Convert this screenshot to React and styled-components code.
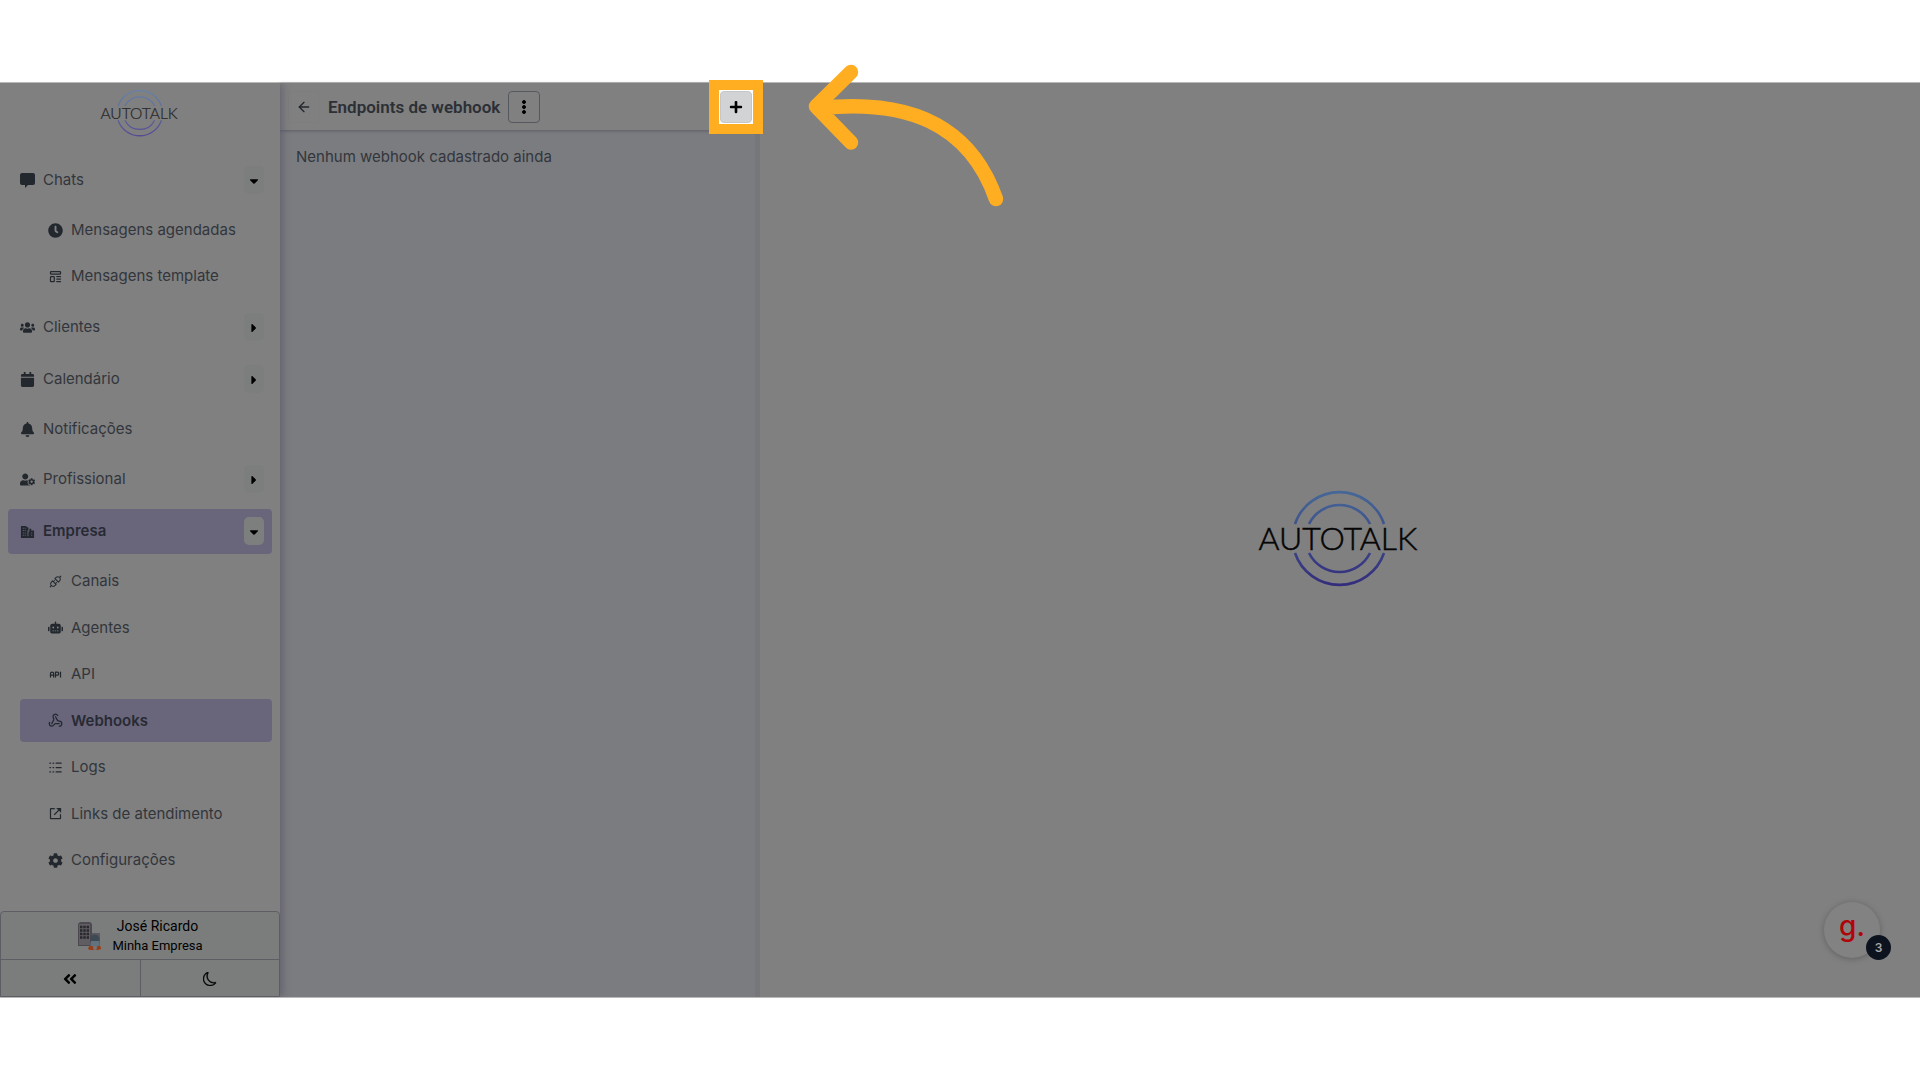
import React from "react";
import styled, { createGlobalStyle } from "styled-components";
import { FaClock, FaUsers, FaCalendar, FaBell, FaUserCog, FaRobot, FaCog, FaPlus, FaAngleDoubleLeft, FaCaretDown, FaCaretRight } from "react-icons/fa";
import { AiOutlineApi } from "react-icons/ai";
import { BsThreeDotsVertical, BsMoon } from "react-icons/bs";
import { TbApi, TbTemplate } from "react-icons/tb";
import { BiLinkExternal } from "react-icons/bi";
import { Logs, ArrowLeft, Webhook } from "lucide-react";

const GlobalStyle = createGlobalStyle`
  *, *::before, *::after { box-sizing: border-box; }
  body { margin: 0; background: #fff; font-family: Inter, "Liberation Sans", sans-serif; color: #32363c; }
  button { font: inherit; cursor: pointer; }
`;

const Page = styled.div`
  min-height: 100vh;
  padding: 82px 0;
  display: flex;
`;

const Stage = styled.div`
  position: relative;
  flex: 1;
  display: flex;
  background: #808080;
  border: solid #b8b8b8;
  border-width: 1px 0;
`;

const Sidebar = styled.aside`
  width: 280px;
  display: flex;
  flex-direction: column;
  z-index: 1;
  box-shadow: 2px 0 8px rgba(70, 68, 92, 0.5);
  clip-path: inset(0 -12px 0 0);
  background: #808080;
`;

const LogoBar = styled.div`
  display: flex;
  justify-content: center;
  padding: 7px 0 20px;
`;

const Nav = styled.nav`
  flex: 1;
  display: flex;
  flex-direction: column;
  gap: 7px;
  padding: 0 8px 29px;
`;

const Group = styled.div`
  display: flex;
  flex-direction: column;
  gap: 6px;
  flex: ${(p) => (p.$grow ? "1" : "none")};
`;

const Row = styled.div`
  display: flex;
  align-items: center;
  height: ${(p) => (p.$plain ? "41px" : "45px")};
  padding: 0 8px 0 12px;
  border-radius: 4px;
  background: ${(p) => (p.$active ? "#69667c" : "transparent")};
`;

const NavLink = styled.a`
  flex: 1;
  display: flex;
  align-items: center;
  gap: 8px;
  font-size: 15px;
  line-height: 20px;
  font-weight: ${(p) => (p.$active ? 600 : 400)};
  color: ${(p) => (p.$active ? "#282a33" : "#32363c")};
  text-decoration: none;
  svg { width: 15px; height: 15px; color: #23282e; flex: none; }
`;

const SubList = styled.div`
  flex: 1;
  display: flex;
  flex-direction: column;
  justify-content: space-between;
  gap: 3px;
  padding-left: 12px;
`;

const SubLink = styled(NavLink)`
  flex: none;
  height: 43px;
  padding-left: 28px;
  border-radius: 4px;
  background: ${(p) => (p.$active ? "#69667c" : "transparent")};
`;

const Toggle = styled.button`
  width: 20px;
  height: 28px;
  padding: 2px 0 0;
  display: grid;
  place-items: center;
  border: 0;
  border-radius: 5px;
  color: #000;
  background: ${(p) => (p.$active ? "#7d7f7e" : "#7c7e7e")};
  svg { width: 14px; height: 14px; }
`;

const Footer = styled.footer`
  border: 1px solid #5d5e64;
  border-radius: 4px 4px 0 0;
  background: #7b7d7c;
  color: #000;
`;

const Account = styled.button`
  width: 100%;
  height: 48px;
  display: flex;
  align-items: center;
  justify-content: center;
  gap: 10px;
  padding: 0;
  border: 0;
  border-bottom: 1px solid #5d5e64;
  background: none;
  color: inherit;
`;

const AccountText = styled.span`
  display: flex;
  flex-direction: column;
  font-family: Roboto, sans-serif;
  font-size: 14px;
  line-height: 20px;
`;

const Company = styled.span`
  font-size: 13px;
`;

const FooterActions = styled.div`
  display: flex;
`;

const FooterButton = styled.button`
  flex: 1;
  height: 36px;
  display: grid;
  place-items: center;
  padding: 2px 0 0;
  border: 0;
  background: none;
  color: #000;
  & + & { border-left: 1px solid #5d5e64; }
`;

const ListPanel = styled.section`
  width: 480px;
  display: flex;
  flex-direction: column;
  background: #7b7c7f;
`;

const PanelHeader = styled.header`
  height: 47px;
  display: flex;
  align-items: center;
  gap: 8px;
  padding: 0 7px 0 8px;
  background: #808080;
  box-shadow: 0 1px 3px rgba(80, 80, 92, 0.7);
  z-index: 0;
`;

const Title = styled.h1`
  margin: 0;
  font-family: Roboto, sans-serif;
  font-size: 17px;
  line-height: 24px;
  font-weight: 600;
  color: #2c3036;
`;

const SquareButton = styled.button`
  width: 32px;
  height: 32px;
  display: grid;
  place-items: center;
  padding: 0;
  border: 1px solid ${(p) => p.$line || "#7d7e80"};
  border-radius: 4px;
  background: ${(p) => p.$fill || "transparent"};
  color: ${(p) => p.$ink || "#000"};
`;

const Highlight = styled.span`
  margin-left: auto;
  padding: 1px;
  background: #fff;
  outline: 10px solid #ffae22;
  z-index: 2;
`;

const PanelBody = styled.div`
  flex: 1;
  border-right: 5px solid #77777b;
  padding: 15px 16px;
  font-size: 15px;
  line-height: 24px;
`;

const Empty = styled.p`
  margin: 0;
`;

const Main = styled.main`
  flex: 1;
  display: grid;
  place-items: center;
`;

const Arrow = styled.svg`
  position: absolute;
  left: 800px;
  top: -23px;
`;

const Guide = styled.button`
  position: absolute;
  right: 40px;
  bottom: 39px;
  width: 56px;
  height: 56px;
  padding: 0 0 8px;
  border: 0;
  border-radius: 50%;
  background: #828282;
  box-shadow: 0 1px 6px rgba(0, 0, 0, 0.25);
  color: #b00508;
  font-size: 28px;
  line-height: 40px;
  font-weight: 500;
`;

const Badge = styled.span`
  position: absolute;
  right: -11px;
  bottom: -2px;
  width: 25px;
  height: 25px;
  border-radius: 50%;
  background: #0c131e;
  color: #a5a7aa;
  font-size: 12px;
  line-height: 25px;
  font-weight: 600;
`;

function Logo({ width, top, bottom, ink, id }) {
  return (
    <svg width={width} viewBox="2 1 160 98" overflow="visible" role="img" aria-label="AUTOTALK">
      <defs>
        <linearGradient id={id} gradientUnits="userSpaceOnUse" x1="0" y1="2" x2="0" y2="96">
          <stop offset="0" stopColor={top} />
          <stop offset="1" stopColor={bottom} />
        </linearGradient>
      </defs>
      <g fill="none" stroke={`url(#${id})`} strokeWidth="2.600">
        <path d="M37 34A47 47 0 0 1 126 34M51 34A34 34 0 0 1 112 34M37 63A47 47 0 0 0 126 63M51 63A34 34 0 0 0 112 63" />
      </g>
      <text x="80" y="60" textAnchor="middle" fontFamily="Lato, sans-serif" fontWeight="300" fontSize="32" fill={ink} stroke={ink} strokeWidth="0.500">AUTOTALK</text>
    </svg>
  );
}

function ChatIcon() {
  return (
    <svg viewBox="0 0 15 15" fill="currentColor" aria-hidden="true">
      <path d="M2 0h11a2 2 0 0 1 2 2v8a2 2 0 0 1-2 2H8l-3 3v-3H2a2 2 0 0 1-2-2V2a2 2 0 0 1 2-2z" />
    </svg>
  );
}

function BuildingIcon() {
  return (
    <svg viewBox="0 0 16 16" fill="currentColor" aria-hidden="true">
      <path fillRule="evenodd" d="M1 2h5l3 2v4h1V5h2v2h3v8H1zM3 4v1h1V4zm2 0v1h1V4zM3 6.500v1h1v-1zm2 0v1h1v-1zM3 9v1h1V9zm2 0v1h1V9zm-2 2.500v1h1v-1zm2 0v1h1v-1zM8 7v6h1V7zm4 2v1h1V9zm0 2.500v1h1v-1z" />
    </svg>
  );
}

function AccountIcon() {
  return (
    <svg width="25" height="30" viewBox="0 0 25 30" aria-hidden="true">
      <path d="M1 3l2-2h10l2 2v22H1z" fill="#4c4a50" />
      <path d="M2 3h11v21H2z" fill="#5f5c62" />
      <path d="M3 6h9M3 9.500h9M3 13h9M3 16.500h9" stroke="#29272e" strokeWidth="2.400" strokeDasharray="2.400 0.900" />
      <path d="M15 12h8v14h-8z" fill="#5b5960" />
      <circle cx="18" cy="18" r="4.500" fill="#3d4a54" />
      <path d="M14 20h8l1 7H13z" fill="#62727e" />
      <path d="M11 28q1-4 4-3l3 2 3-2q3-1 3 3l-3 1H13z" fill="#963f18" />
      <circle cx="18" cy="27" r="2" fill="#777" />
    </svg>
  );
}

function NavRow({ icon, label, open, active }) {
  const expandable = open !== undefined;
  return (
    <Row $plain={!expandable} $active={active}>
      <NavLink href="#" $active={active}>{icon}{label}</NavLink>
      {expandable && (
        <Toggle $active={active} aria-label={label} aria-expanded={open}>
          {open ? <FaCaretDown /> : <FaCaretRight />}
        </Toggle>
      )}
    </Row>
  );
}

const chatLinks = [
  ["Mensagens agendadas", <FaClock />],
  ["Mensagens template", <TbTemplate />],
];

const companyLinks = [
  ["Canais", <AiOutlineApi />],
  ["Agentes", <FaRobot />],
  ["API", <TbApi />],
  ["Webhooks", <Webhook />],
  ["Logs", <Logs />],
  ["Links de atendimento", <BiLinkExternal />],
  ["Configurações", <FaCog />],
];

function SubLinks({ items, current }) {
  return (
    <SubList>
      {items.map(([label, icon]) => (
        <SubLink href="#" key={label} $active={label === current}>{icon}{label}</SubLink>
      ))}
    </SubList>
  );
}

export default function App() {
  return (
    <Page>
      <GlobalStyle />
      <Stage>
        <Sidebar>
          <LogoBar><Logo id="logo-small" width={78} top="#6482a8" bottom="#554a92" ink="#28282a" /></LogoBar>
          <Nav>
            <Group>
              <NavRow icon={<ChatIcon />} label="Chats" open />
              <SubLinks items={chatLinks} />
            </Group>
            <NavRow icon={<FaUsers />} label="Clientes" open={false} />
            <NavRow icon={<FaCalendar />} label="Calendário" open={false} />
            <NavRow icon={<FaBell />} label="Notificações" />
            <NavRow icon={<FaUserCog />} label="Profissional" open={false} />
            <Group $grow>
              <NavRow icon={<BuildingIcon />} label="Empresa" open active />
              <SubLinks items={companyLinks} current="Webhooks" />
            </Group>
          </Nav>
          <Footer>
            <Account>
              <AccountIcon />
              <AccountText>José Ricardo<Company>Minha Empresa</Company></AccountText>
            </Account>
            <FooterActions>
              <FooterButton aria-label="Recolher menu"><FaAngleDoubleLeft size={16} /></FooterButton>
              <FooterButton aria-label="Tema escuro"><BsMoon size={14} stroke="currentColor" strokeWidth={0.5} /></FooterButton>
            </FooterActions>
          </Footer>
        </Sidebar>
        <ListPanel>
          <PanelHeader>
            <SquareButton aria-label="Voltar" $ink="#23272c"><ArrowLeft size={16} strokeWidth={2} /></SquareButton>
            <Title>Endpoints de webhook</Title>
            <SquareButton aria-label="Mais opções" $line="#55595f"><BsThreeDotsVertical size={16} stroke="currentColor" strokeWidth={1} /></SquareButton>
            <Highlight>
              <SquareButton aria-label="Adicionar webhook" $fill="#d2d3d5" $line="#c4c6c9"><FaPlus size={14} /></SquareButton>
            </Highlight>
          </PanelHeader>
          <PanelBody><Empty>Nenhum webhook cadastrado ainda</Empty></PanelBody>
        </ListPanel>
        <Main><Logo id="logo-main" width={160} top="#456797" bottom="#332c7c" ink="#050505" /></Main>
        <Arrow width="210" height="150" viewBox="800 60 210 150" fill="none" stroke="#ffae22" strokeWidth="14.500" strokeLinecap="round" strokeLinejoin="round" aria-hidden="true">
          <path d="M851 72L816 106.500L851 142.500M820 108C905 99 969 122 996 199" />
        </Arrow>
        <Guide aria-label="Guias">g.<Badge>3</Badge></Guide>
      </Stage>
    </Page>
  );
}
